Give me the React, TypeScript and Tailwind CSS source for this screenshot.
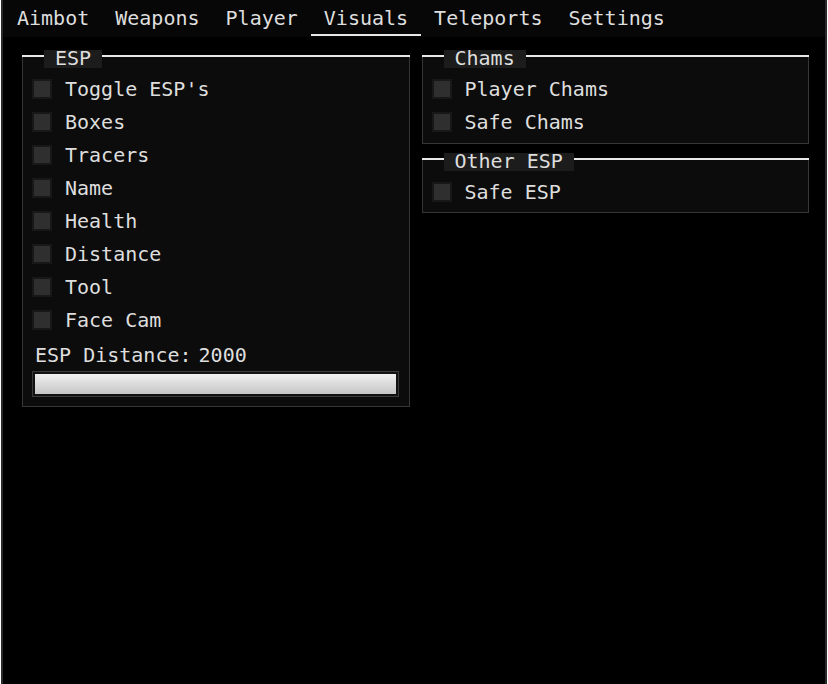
import type { ReactNode } from "react";

const tabs = ["Aimbot", "Weapons", "Player", "Visuals", "Teleports", "Settings"];
const espToggles = ["Toggle ESP's", "Boxes", "Tracers", "Name", "Health", "Distance", "Tool", "Face Cam"];

function Checkbox({ label }: { label: string }) {
  return (
    <div className="flex h-[33px] items-center pl-[9px]">
      <div className="h-[20px] w-[20px] border-2 border-[#181818] bg-[#2f2f2f]" />
      <span className="ml-[13px]">{label}</span>
    </div>
  );
}

function Group({ title, children, className = "" }: { title: string; children: ReactNode; className?: string }) {
  return (
    <div className={`border-x border-b border-[#363636] bg-[#0c0c0c] ${className}`}>
      {/* header line with the title cut into it */}
      <div className="-mx-px -mt-[5px] flex h-[18px] items-start">
        <div className="mt-[5px] h-[2px] w-[22px] bg-[#e8e8e8]" />
        <div className="h-[18px] bg-[#1c1c1c] px-[11px] leading-[16px]">{title}</div>
        <div className="mt-[5px] h-[2px] flex-1 bg-[#e8e8e8]" />
      </div>
      {children}
    </div>
  );
}

export default function App() {
  return (
    <div
      className="ml-[1px] h-[684px] w-[826px] border-x-2 border-[#2a2a2a] bg-black text-[20px] text-[#dedede]"
      style={{ fontFamily: '"DejaVu Sans Mono", "Liberation Mono", monospace' }}
    >
      {/* Tab bar */}
      <div className="flex h-[37px] bg-[#070707] pl-[1px]">
        {tabs.map((t) => (
          <div key={t} className="flex h-full flex-col">
            <span className="mt-[5px] px-[13px] leading-[26px]">{t}</span>
            {t === "Visuals" && <div className="mt-[3px] h-[2px] bg-[#e8e8e8]" />}
          </div>
        ))}
      </div>

      <div className="grid grid-cols-2 gap-[12px] pl-[19px] pr-[16px] pt-[18px]">
        <Group title="ESP" className="pb-[9px]">
          <div className="pt-[4px]">
            {espToggles.map((l) => (
              <Checkbox key={l} label={l} />
            ))}
            <div className="flex h-[35px] items-center pl-[12px] pt-[2px]">
              <span>ESP Distance:</span>
              <span className="ml-[7px]">2000</span>
            </div>
            <div className="ml-[9px] mr-[10px] border border-[#3a3a3a] bg-[#111] p-[2px]">
              <div className="h-[20px] bg-gradient-to-b from-[#f0f0f0] to-[#c6c6c6]" />
            </div>
          </div>
        </Group>

        <div className="flex flex-col items-stretch self-start">
          <Group title="Chams" className="pb-[5px]">
            <div className="pt-[4px]">
              <Checkbox label="Player Chams" />
              <Checkbox label="Safe Chams" />
            </div>
          </Group>
          <Group title="Other ESP" className="mt-[14px] pb-[4px]">
            <div className="pt-[4px]">
              <Checkbox label="Safe ESP" />
            </div>
          </Group>
        </div>
      </div>
    </div>
  );
}
